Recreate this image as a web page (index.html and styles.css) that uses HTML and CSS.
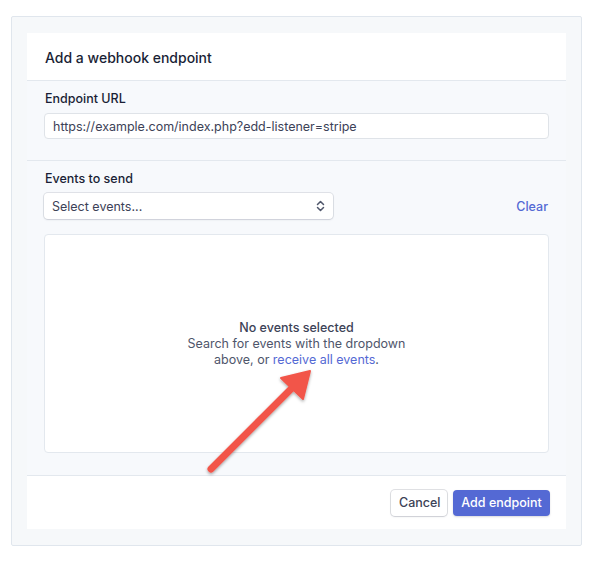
FILE: index.html
```html
<!DOCTYPE html>
<html lang="en">
<head>
  <meta charset="UTF-8">
  <title>Add a webhook endpoint</title>
  <link rel="stylesheet" href="styles.css">
</head>
<body>

<div class="frame">
  <div class="modal">
    <div class="modal-header">Add a webhook endpoint</div>

    <div class="modal-body">
      <div class="section section-url">
        <label class="field-label">Endpoint URL</label>
        <div class="text-input">https://example.com/index.php?edd-listener=stripe</div>
      </div>

      <div class="section section-events">
        <label class="field-label">Events to send</label>
        <div class="select-row">
          <div class="select">
            <span>Select events...</span>
            <svg class="chevrons" width="9" height="12" viewBox="0 0 9 12">
              <path d="M1.5 4.5 L4.5 1.5 L7.5 4.5" fill="none" stroke="#4f566b" stroke-width="1.5" stroke-linecap="round" stroke-linejoin="round"/>
              <path d="M1.5 7.5 L4.5 10.5 L7.5 7.5" fill="none" stroke="#4f566b" stroke-width="1.5" stroke-linecap="round" stroke-linejoin="round"/>
            </svg>
          </div>
          <a class="clear-link">Clear</a>
        </div>
        <div class="events-box">
          <div class="empty-title">No events selected</div>
          <div class="empty-text">Search for events with the dropdown<br>above, or <a class="link">receive all events</a>.</div>
        </div>
      </div>
    </div>

    <div class="modal-footer">
      <button class="btn btn-cancel">Cancel</button>
      <button class="btn btn-primary">Add endpoint</button>
    </div>
  </div>
</div>

<!-- annotation arrow drawn over the screenshot -->
<svg class="arrow" width="595" height="561" viewBox="0 0 595 561">
  <defs>
    <filter id="shadow" x="-20%" y="-20%" width="140%" height="140%">
      <feDropShadow dx="0" dy="1.5" stdDeviation="1.5" flood-color="#000" flood-opacity="0.35"/>
    </filter>
  </defs>
  <g filter="url(#shadow)">
    <line x1="211" y1="469" x2="296" y2="384" stroke="#f2554a" stroke-width="7" stroke-linecap="round"/>
    <path d="M310 371 L281 378 L303 399 Z" fill="#f2554a" stroke="#f2554a" stroke-width="2" stroke-linejoin="round"/>
  </g>
</svg>

</body>
</html>
```

FILE: styles.css
```css
body {
  margin: 0;
  background: #fff;
  font-family: Inter, "Noto Sans", Arial, sans-serif;
  color: #3c4257;
}

.frame {
  position: relative;
  margin: 16px 0 0 11px;
  width: 539px;
  height: 496px;
  padding: 16px 15px 16px 15px;
  background: #f6f8fa;
  border: 1px solid #e0e6ed;
  border-radius: 2px;
}

.modal {
  display: flex;
  flex-direction: column;
  height: 496px;
  background: #f7f9fc;
}

.modal-header {
  height: 48px;
  box-sizing: border-box;
  display: flex;
  align-items: center;
  padding: 1px 18px 0;
  background: #fff;
  border-bottom: 1px solid #e3e8ee;
  font-size: 14px;
  font-weight: 500;
  color: #1a1f36;
}

.modal-body {
  flex-grow: 1;
  display: flex;
  flex-direction: column;
}

.section {
  padding: 0 17px;
}

.section-url {
  height: 79px;
  border-bottom: 1px solid #e3e8ee;
}

.section-events {
  flex-grow: 1;
}

.field-label {
  display: block;
  padding: 10px 1px 0;
  height: 22px;
  font-size: 12.5px;
  font-weight: 500;
  color: #1a1f36;
}

.text-input {
  height: 26px;
  box-sizing: border-box;
  display: flex;
  align-items: center;
  padding: 0 8px;
  background: #fff;
  border: 1px solid #dfe3e8;
  border-radius: 4px;
  font-size: 12.5px;
  color: #3c4257;
}

.select-row {
  display: flex;
  align-items: center;
  justify-content: space-between;
}

.select {
  width: 289px;
  height: 26px;
  box-sizing: border-box;
  display: flex;
  align-items: center;
  justify-content: space-between;
  padding: 0 8px;
  background: #fff;
  border-radius: 4px;
  box-shadow: 0 0 0 1px rgba(60, 66, 87, 0.12), 0 1px 2px rgba(60, 66, 87, 0.12);
  font-size: 12.5px;
  color: #3c4257;
}

.clear-link {
  font-size: 12.5px;
  font-weight: 500;
  color: #5469d4;
  margin-right: 1px;
}

.events-box {
  margin-top: 15px;
  height: 219px;
  box-sizing: border-box;
  display: flex;
  flex-direction: column;
  align-items: center;
  justify-content: center;
  background: #fff;
  border: 1px solid #e3e8ee;
  border-radius: 4px;
  text-align: center;
  font-size: 12.5px;
  line-height: 16px;
  padding-bottom: 0;
}

.empty-title {
  font-weight: 500;
  color: #3c4257;
}

.empty-text {
  color: #4f566b;
}

.link {
  color: #5469d4;
}

.modal-footer {
  height: 54px;
  box-sizing: border-box;
  display: flex;
  align-items: center;
  justify-content: flex-end;
  gap: 6px;
  padding: 0 16px 0 0;
  background: #fff;
  border-top: 1px solid #e3e8ee;
}

.btn {
  height: 26px;
  padding: 0 8px;
  border-radius: 4px;
  font-family: Inter, "Noto Sans", Arial, sans-serif;
  font-size: 12.5px;
  font-weight: 500;
}

.btn-cancel {
  width: 56px;
  background: #fff;
  color: #3c4257;
  border: none;
  box-shadow: 0 0 0 1px rgba(60, 66, 87, 0.16), 0 1px 2px rgba(60, 66, 87, 0.12);
}

.btn-primary {
  width: 97px;
  background: #5469d4;
  color: #fff;
  border: none;
  box-shadow: 0 1px 2px rgba(60, 66, 87, 0.2);
}

.arrow {
  position: absolute;
  top: 0;
  left: 0;
  pointer-events: none;
}
```
